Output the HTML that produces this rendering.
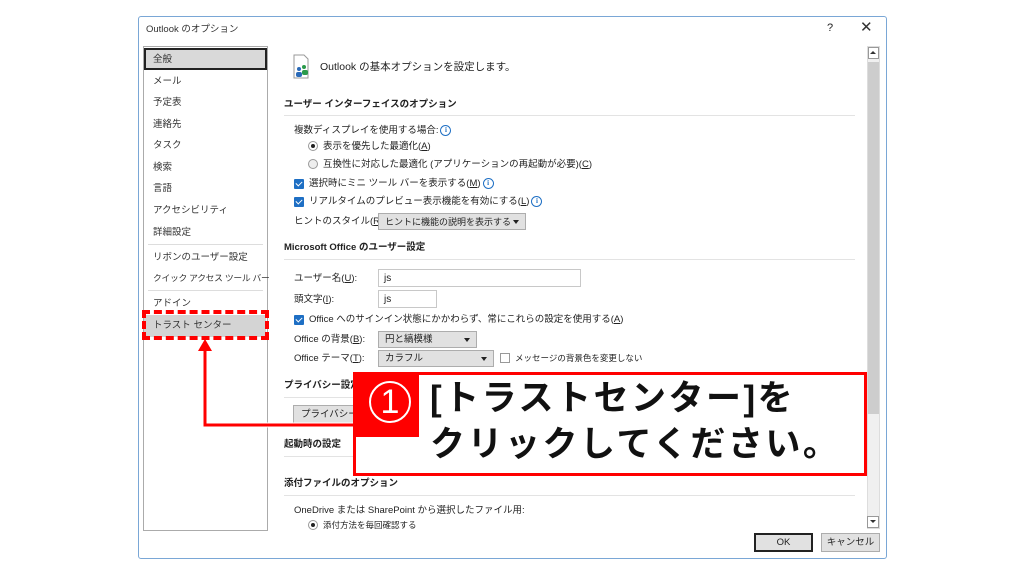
<!DOCTYPE html>
<html><head><meta charset="utf-8"><style>
*{margin:0;padding:0;box-sizing:border-box}
body{width:1024px;height:576px;background:#fff;position:relative;overflow:hidden;font-family:"Liberation Sans","Noto Sans CJK JP",sans-serif;font-size:9.5px;line-height:17px;color:#222}
.a{position:absolute;white-space:nowrap}
.dlg{position:absolute;left:138px;top:16px;width:749px;height:543px;border:1px solid #7aa7d6;border-radius:3px;background:#fff}
.nav{position:absolute;left:143px;top:46px;width:125px;height:485px;border:1px solid #ababab;background:#fff}
.ni{position:absolute;font-size:9.5px;color:#333}
.sec{font-weight:bold;font-size:9.5px;color:#222}
.hr{position:absolute;left:284px;width:571px;height:1px;background:#e3e3e3}
.cb{position:absolute;width:10px;height:10px;background:#1e6fc4;border-radius:1px}
.cb:after{content:"";position:absolute;left:3px;top:1px;width:3px;height:5px;border:solid #fff;border-width:0 1.5px 1.5px 0;transform:rotate(45deg)}
.rd{position:absolute;width:10px;height:10px;border:1px solid #999;border-radius:50%;background:#fff}
.info{display:inline-block;vertical-align:middle;margin-left:2px;width:11px;height:11px;border:1.3px solid #1e6fc4;border-radius:50%;color:#1e6fc4;font-size:7px;font-weight:bold;text-align:center;line-height:8px;font-family:"Liberation Serif",serif}
.dd{position:absolute;height:17px;border:1px solid #adadad;background:#e1e1e1;font-size:9.5px;padding:1px 6px;line-height:14px;white-space:nowrap;overflow:hidden}
.dd:after{content:"";position:absolute;right:6px;top:6px;border:3px solid transparent;border-top:4px solid #222}
.tb{position:absolute;height:18px;border:1px solid #c8c8c8;background:#fff;padding:1px 5px;font-size:10px;line-height:15px}
</style></head><body>
<div class="dlg"></div>
<div class="a" style="left:146px;top:21px;color:#333">Outlook のオプション</div>
<div class="a" style="left:827px;top:20px;font-size:11px">?</div>
<div class="a" style="left:860px;top:19px;font-size:15px;color:#333">✕</div>

<div class="nav"></div>
<div class="a" style="left:144px;top:48px;width:123px;height:22px;background:#d9d9d9;border:2px solid #222"></div>
<div class="a" style="left:144px;top:315px;width:122px;height:22px;background:#d4d4d4"></div>
<div class="ni a" style="left:153px;top:51px">全般</div>
<div class="ni a" style="left:153px;top:73px">メール</div>
<div class="ni a" style="left:153px;top:94px">予定表</div>
<div class="ni a" style="left:153px;top:116px">連絡先</div>
<div class="ni a" style="left:153px;top:137px">タスク</div>
<div class="ni a" style="left:153px;top:159px">検索</div>
<div class="ni a" style="left:153px;top:180px">言語</div>
<div class="ni a" style="left:153px;top:202px">アクセシビリティ</div>
<div class="ni a" style="left:153px;top:224px">詳細設定</div>
<div class="a" style="left:148px;top:244px;width:115px;height:1px;background:#ddd"></div>
<div class="ni a" style="left:153px;top:249px">リボンのユーザー設定</div>
<div class="ni a" style="left:153px;top:270px;font-size:8.8px;letter-spacing:-0.3px">クイック アクセス ツール バー</div>
<div class="a" style="left:148px;top:290px;width:115px;height:1px;background:#ddd"></div>
<div class="ni a" style="left:153px;top:295px">アドイン</div>
<div class="ni a" style="left:153px;top:317px">トラスト センター</div>

<svg class="a" style="left:292px;top:54px" width="24" height="26" viewBox="0 0 24 26"><path d="M2 1h10l4 4v19H2z" fill="#fff" stroke="#999"/><circle cx="7" cy="15" r="2" fill="#2a6ab8"/><circle cx="12" cy="13" r="2" fill="#2a9a4a"/><rect x="4" y="18" width="6" height="5" rx="2" fill="#2a6ab8"/><rect x="10" y="16" width="6" height="5" rx="2" fill="#2a9a4a"/></svg>
<div class="a" style="left:320px;top:59px;font-size:10.5px">Outlook の基本オプションを設定します。</div>

<div class="a sec" style="left:284px;top:96px">ユーザー インターフェイスのオプション</div>
<div class="hr" style="top:115px"></div>
<div class="a" style="left:294px;top:122px">複数ディスプレイを使用する場合:<span class="info">i</span></div>
<div class="rd" style="left:308px;top:141px"><div style="position:absolute;left:2px;top:2px;width:4px;height:4px;border-radius:50%;background:#222"></div></div>
<div class="a" style="left:323px;top:138px">表示を優先した最適化(<u>A</u>)</div>
<div class="rd" style="left:308px;top:159px;background:#eee"></div>
<div class="a" style="left:323px;top:156px">互換性に対応した最適化 (アプリケーションの再起動が必要)(<u>C</u>)</div>
<div class="cb" style="left:294px;top:179px"></div><div class="a" style="left:309px;top:175px">選択時にミニ ツール バーを表示する(<u>M</u>)<span class="info">i</span></div>
<div class="cb" style="left:294px;top:197px"></div><div class="a" style="left:309px;top:193px">リアルタイムのプレビュー表示機能を有効にする(<u>L</u>)<span class="info">i</span></div>
<div class="a" style="left:294px;top:213px">ヒントのスタイル(<u>R</u>):</div>
<div class="dd" style="left:378px;top:213px;width:148px;padding-right:18px;font-size:9px">ヒントに機能の説明を表示する</div>

<div class="a sec" style="left:284px;top:239px">Microsoft Office のユーザー設定</div>
<div class="hr" style="top:259px"></div>
<div class="a" style="left:294px;top:270px">ユーザー名(<u>U</u>):</div><div class="tb" style="left:378px;top:269px;width:203px">js</div>
<div class="a" style="left:294px;top:291px">頭文字(<u>I</u>):</div><div class="tb" style="left:378px;top:290px;width:59px">js</div>
<div class="cb" style="left:294px;top:315px"></div><div class="a" style="left:309px;top:311px">Office へのサインイン状態にかかわらず、常にこれらの設定を使用する(<u>A</u>)</div>
<div class="a" style="left:294px;top:331px">Office の背景(<u>B</u>):</div><div class="dd" style="left:378px;top:331px;width:99px">円と縞模様</div>
<div class="a" style="left:294px;top:350px">Office テーマ(<u>T</u>):</div><div class="dd" style="left:378px;top:350px;width:116px">カラフル</div>
<div class="a" style="left:500px;top:353px;width:10px;height:10px;border:1px solid #999"></div><div class="a" style="left:515px;top:350px;font-size:8.5px">メッセージの背景色を変更しない</div>
<div class="a sec" style="left:284px;top:377px">プライバシー設定</div>
<div class="hr" style="top:397px"></div>
<div class="a" style="left:293px;top:405px;width:70px;height:20px;border:1px solid #adadad;background:#e1e1e1;padding:0 7px">プライバシー設定</div>
<div class="a sec" style="left:284px;top:436px">起動時の設定</div>
<div class="hr" style="top:456px"></div>
<div class="a sec" style="left:284px;top:475px">添付ファイルのオプション</div>
<div class="hr" style="top:495px"></div>
<div class="a" style="left:294px;top:502px">OneDrive または SharePoint から選択したファイル用:</div>
<div class="rd" style="left:308px;top:520px"><div style="position:absolute;left:2px;top:2px;width:4px;height:4px;border-radius:50%;background:#222"></div></div>
<div class="a" style="left:323px;top:517px;font-size:8.5px">添付方法を毎回確認する</div>

<div class="a" style="left:867px;top:46px;width:13px;height:483px;background:#f0f0f0;border:1px solid #ddd"></div>
<div class="a" style="left:868px;top:62px;width:11px;height:352px;background:#cdcdcd"></div>
<div class="a" style="left:868px;top:47px;width:11px;height:12px;border:1px solid #999;background:#fff"></div>
<div class="a" style="left:870px;top:51px;border:3px solid transparent;border-bottom:3px solid #333;border-top:0"></div>
<div class="a" style="left:867px;top:516px;width:12px;height:12px;border:1px solid #999;background:#fff"></div>
<div class="a" style="left:870px;top:520px;border:3px solid transparent;border-top:3px solid #333;border-bottom:0"></div>

<div class="a" style="left:754px;top:533px;width:59px;height:19px;border:2px solid #222;background:#e1e1e1;text-align:center;line-height:15px">OK</div>
<div class="a" style="left:821px;top:533px;width:59px;height:19px;border:1px solid #adadad;background:#e1e1e1;text-align:center;line-height:17px">キャンセル</div>

<div class="a" style="left:142px;top:310px;width:127px;height:30px;border:4px dashed #f00"></div>
<svg class="a" style="left:0;top:0" width="1024" height="576"><path d="M205 346V425H356" fill="none" stroke="#fff" stroke-width="5"/><path d="M205 346V425H356" fill="none" stroke="#f00" stroke-width="3"/><path d="M198 351L205 339L212 351Z" fill="#f00"/></svg>
<div class="a" style="left:353px;top:372px;width:514px;height:104px;border:3px solid #f00;background:#fff"></div>
<div class="a" style="left:354px;top:372px;width:65px;height:65px;background:#f00"></div>
<div class="a" style="left:369px;top:381px;width:42px;height:42px;border:2px solid #fff;border-radius:50%;color:#fff;font-size:34px;text-align:center;line-height:38px">1</div>
<div class="a" style="left:430px;top:376px;font-size:35px;font-weight:bold;color:#111;line-height:46px;letter-spacing:2.5px">[トラストセンター]を<br>クリックしてください。</div>
</body></html>
